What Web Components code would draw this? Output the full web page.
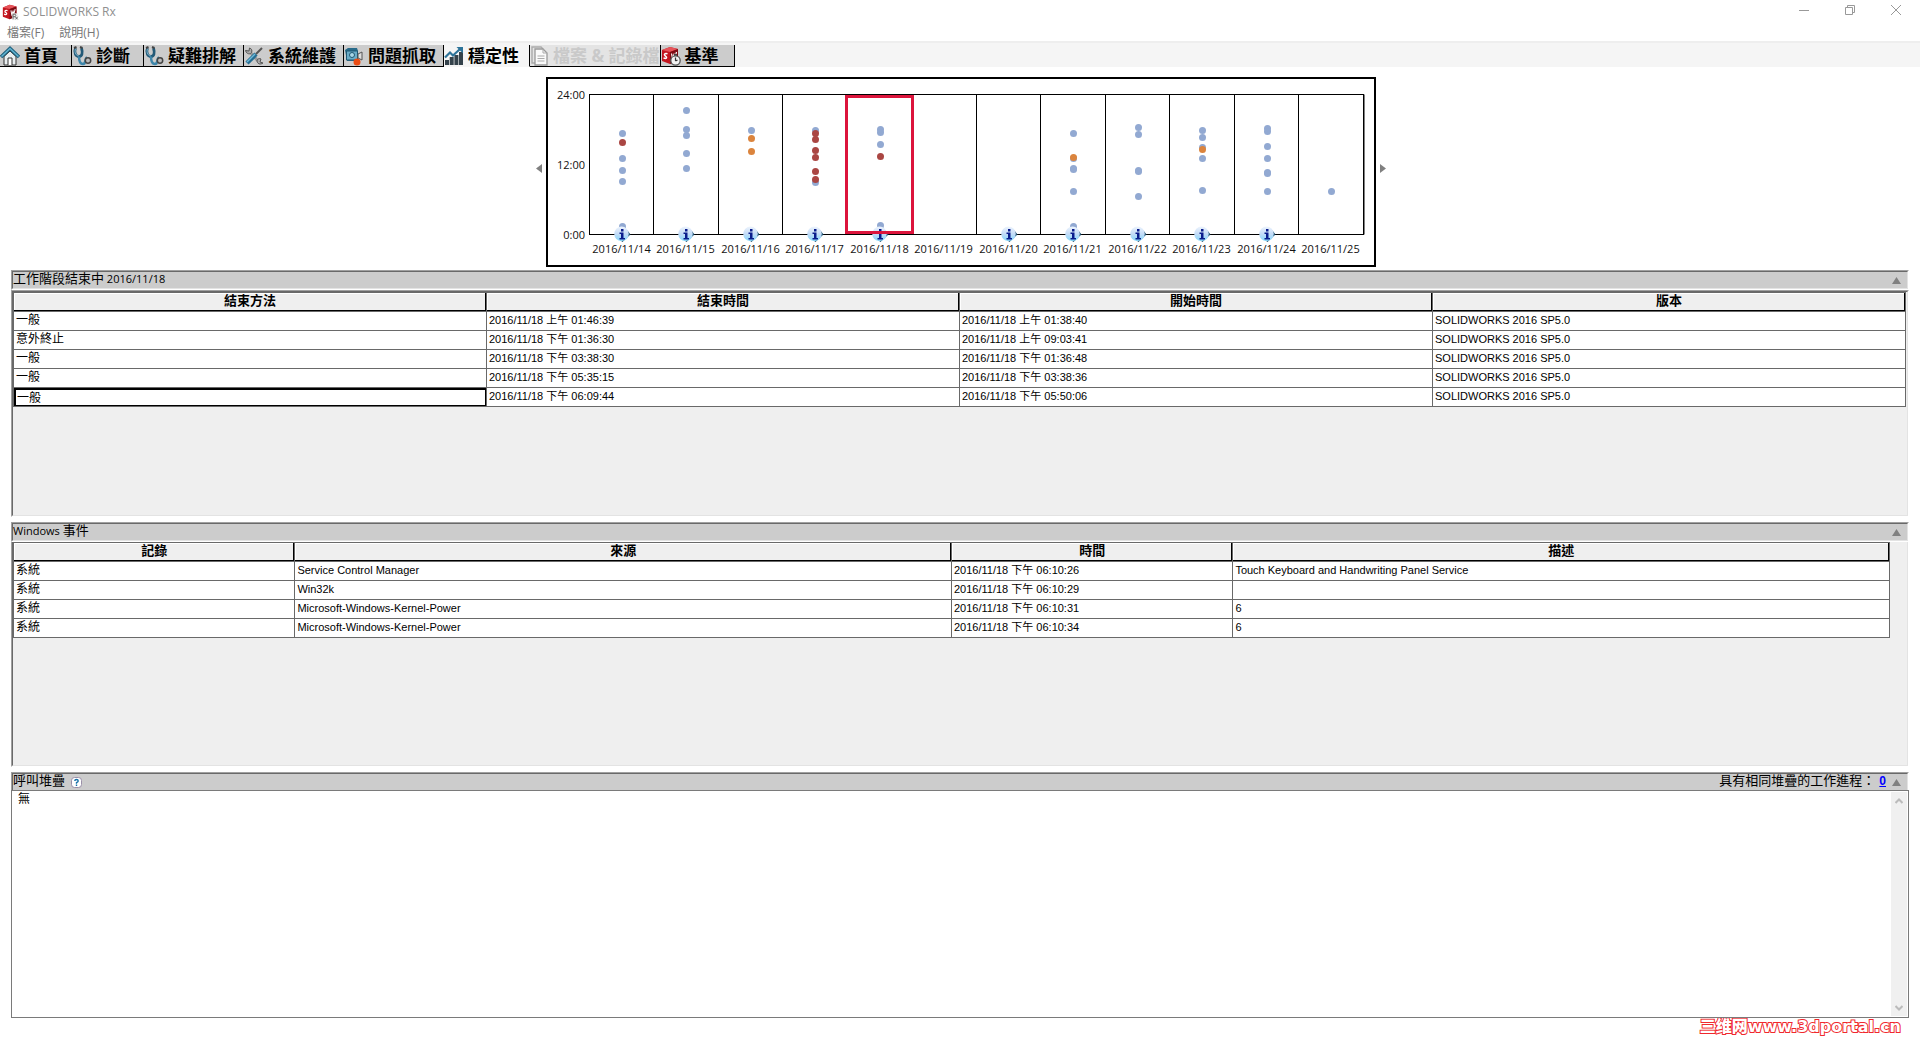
<!DOCTYPE html>
<html lang="zh-Hant">
<head>
<meta charset="utf-8">
<title>SOLIDWORKS Rx</title>
<style>
html,body{margin:0;height:100%}
body{background:#fff;color:#000;font-family:"Open Sans","Noto Sans CJK TC",sans-serif;font-size:12px}
</style>
</head>
<body>
<rx-app></rx-app>
<script>
const BASE = `*{box-sizing:border-box}
button{font:inherit;color:inherit;background:none;border:0;padding:0;margin:0}
svg{display:block;flex:none}`;

function define(name, render) {
  customElements.define(name, class extends HTMLElement {
    constructor() { super(); this.attachShadow({mode: 'open'}); }
    connectedCallback() { this.shadowRoot.innerHTML = render(this); }
  });
}

const CUBE = `<path d="M1 4 9 1l8 2v11l-8 4-8-3z" fill="#c4161f"/><path d="M1 4 9 1l8 2-8 3z" fill="#e6545a"/><path d="M9 6l8-3v11l-8 4z" fill="#7c0a12"/><path d="M6.500 7.800c-3-1-4 1-2 2.300s1 3.200-2 1.800" fill="none" stroke="#fff" stroke-width="1.500"/><path d="M10.500 7.500l1 5 1.500-4 1 3 1.500-5.500" fill="none" stroke="#fff" stroke-width="1.200"/>`;
const STETH = `<path d="M3.500 2C1.500 7 4 10.500 7 10.500S11 7 9.500 2" fill="none" stroke="#235a78" stroke-width="2.800"/><path d="M3.500 2.500C2 7 4.500 10 7 10" fill="none" stroke="#7fb6d0"/><path d="M2 2l2.500-1M8 1l2.500 1" stroke="#444" stroke-width="2"/><path d="M7 10.500c0 4 1 7.500 4 7.500 3.500 0 1.500-6 4-6.500" fill="none" stroke="#3d86aa" stroke-width="2.500"/><circle cx="16" cy="14.500" r="2.700" fill="#bbb" stroke="#444" stroke-width="1.500"/>`;
const ICONS = {
  app: CUBE + `<path d="M12 11h7v8h-7z" fill="#eee"/><path d="M13 18v-6h2.500q1.500 1.500 0 3H13m2.500 0 3 3m0-3-2.500 3" fill="none" stroke="#555"/>`,
  home: `<path d="M4 10.500 10 5l6 5.500V19H4z" fill="#e9eef0" stroke="#333"/><path d="M8 19v-7h4v7" fill="#fff" stroke="#333"/><path d="M1 11 10 2.500l9 8.500" fill="none" stroke="#1d5f7c" stroke-width="3.500"/><path d="M1.500 10.500 10 2.500l8.500 8" fill="none" stroke="#62b4d2" stroke-width="1.500"/>`,
  steth: STETH,
  tools: `<path d="m6 6 9 10" stroke="#999" stroke-width="3"/><path d="M1.500 4.500c1 4 5 4 6 2s0-4-2-4.500l-.5 3zM13 14c0 4 3 5 6 3l-3-1 1-3c-2-1-3 0-4 1z" fill="#aaa" stroke="#555"/><path d="M3 17 12 8" stroke="#256d92" stroke-width="4.500"/><path d="M3 16 11 8" stroke="#6fb9d8" stroke-width="1.500"/><path d="m12 8 6-6" stroke="#555" stroke-width="2"/>`,
  camera: `<path d="M1 4 4 2h9l1 3v10H3z" fill="#286b8a"/><path d="M2.500 5h11v9h-11z" fill="#6aacc8" stroke="#205873"/><circle cx="8" cy="9" r="2.500" fill="#a9d7e8" stroke="#205873"/><path d="m14 8 4-2v8l-4-2z" fill="#ddd" stroke="#555"/><circle cx="13" cy="16" r="3.500" fill="#ea4b12"/>`,
  chart: `<path d="M1 14h4v5H1zM5.700 11h4v8h-4zM10.400 9h4v10h-4zM15 6h4v13h-4z" fill="#34424b"/><path d="m1 11.500 5-5 3 3 7-6.500" fill="none" stroke="#2d7399" stroke-width="2.200"/><path d="M12.500 1H19v6.500z" fill="#2d7399"/>`,
  page: `<path d="M1 3V17h3M1 3V1h9l2 2" fill="none" stroke="#aaa" stroke-width="1.400"/><path d="M4 3h8l4 4v12H4z" fill="#fafafa" stroke="#999" stroke-width="1.300"/><path d="M12 3v4h4M6.500 10h7M6.500 12.500h7M6.500 15h7" fill="none" stroke="#aaa"/>`,
  bench: CUBE + `<path d="M14.500 8V10" stroke="#444" stroke-width="3"/><circle cx="14.500" cy="14.500" r="4.700" fill="#f3f3f3" stroke="#555" stroke-width="1.300"/><path d="M14.500 15v-3.500M14.500 15l2-1" stroke="#333" stroke-width="1.200"/>`
};

define('rx-icon', el => {
  const s = el.getAttribute('size') || 20;
  return `<style>${BASE}:host{display:block;flex:none}</style><svg width="${s}" height="${s}" viewBox="0 0 20 20">${ICONS[el.getAttribute('name')]}</svg>`;
});

define('rx-titlebar', () => `<style>${BASE}
:host{display:flex;align-items:center;height:24px;padding:0 1px;color:#909090}
h1{flex:1;margin:0 0 0 4px;font-size:12px;font-weight:400;line-height:20px}
rx-icon{margin-left:1px}
button{width:46px;height:20px;display:flex;justify-content:center;align-items:center}
div{display:flex;align-self:flex-start}
</style><rx-icon name="app" size="17"></rx-icon><h1>SOLIDWORKS Rx</h1>
<div><button aria-label="Minimize"><svg width="10" height="10"><path d="M0 5.500h10" stroke="#999"/></svg></button>
<button aria-label="Restore"><svg width="10" height="10" fill="none" stroke="#999"><path d="M.5 2.500h7v7h-7zM2.500 2.500v-2h7v7h-2"/></svg></button>
<button aria-label="Close"><svg width="10" height="10"><path d="M0 0l10 10M10 0 0 10" stroke="#999"/></svg></button></div>`);

define('rx-menu', () => `<style>${BASE}
:host{display:flex;height:17px;padding-left:7px;gap:15px;color:#777}
button{line-height:17px}
</style><button>檔案(F)</button><button>說明(H)</button>`);

define('rx-tab', el => `<style>${BASE}
:host{display:block}
button{display:flex;align-items:center;gap:4px;height:22px;min-width:${el.getAttribute('w')}px;background:#ccc;border:solid #000;border-width:0 1px 1px 0;font-size:17px;font-weight:700;line-height:20px;white-space:nowrap}
:host([active]) button{background:none;border-color:transparent;border-right-color:#000}
:host([off]) button{background:#e4e4e4;color:#c9c9c9;padding-left:1px;gap:2px}
</style><button role="tab" ${el.hasAttribute('off') ? 'disabled' : ''} aria-selected="${el.hasAttribute('active')}"><rx-icon name="${el.getAttribute('icon')}"></rx-icon><slot></slot></button>`);

define('rx-tabs', () => `<style>${BASE}
:host{display:flex;height:26px;border-top:2px solid #eee;padding-top:2px;background:#f5f5f5}
</style>
<rx-tab icon="home" w="72">首頁</rx-tab><rx-tab icon="steth" w="72">診斷</rx-tab><rx-tab icon="steth" w="100">疑難排解</rx-tab><rx-tab icon="tools" w="100">系統維護</rx-tab><rx-tab icon="camera" w="100">問題抓取</rx-tab><rx-tab icon="chart" w="86" active>穩定性</rx-tab><rx-tab icon="page" w="130" off>檔案 &amp; 記錄檔</rx-tab><rx-tab icon="bench" w="74">基準</rx-tab>`);

/* Each day lists its sessions as colour code + vertical position in the plot. */
const DAYS = [
  ['14', 1, 'b56 r65 b81 b93 b104 b149'], ['15', 1, 'b33 b52 b58 b76 b91'],
  ['16', 1, 'b53 o61 o74'], ['17', 1, 'b53 r56 r62 r73 r80 r94 b105 r102'],
  ['18', 1, 'b52 b55 b67 r79 b148'], ['19', 0, ''], ['20', 1, ''],
  ['21', 1, 'b56 b81 o80 b91 b92 b114 b149'], ['22', 1, 'b50 b57 b93 b94 b119'],
  ['23', 1, 'b53 b60 b70 o72 b81 b113'], ['24', 1, 'b51 b54 b69 b81 b95 b96 b114'], ['25', 0, 'b114']
];
define('rx-timeline', () => {
  const C = {b: '#92a9d2', r: '#aa4643', o: '#db843d'}, STEP = 64.5;
  const days = DAYS.map(([d, info, pts], i) => {
    const x = Math.floor(43 + STEP * i) + .5, cx = x + 33;
    return `<path d="M${x} 17v140" stroke="#000"/>` +
      pts.split(' ').filter(Boolean).map(p => `<circle cx="${cx}" cy="${+p.slice(1) + .5}" r="3.500" fill="${C[p[0]]}"/>`).join('') +
      (info ? `<g transform="translate(${cx - 8.5} 149.500)"><path d="M4 12 8.500 15.500l2-2L16.500 8l-3-4z" fill="#1d4f6e"/><circle cx="7.500" cy="7.300" r="7.300" fill="url(#g)"/><path d="M7 2.500h2.500V5H7zM5.500 6h4v5.500H11V13H5.500v-1.500H7v-4H5.500z" fill="#0a1c8c"/></g>` : '') +
      `<text x="${cx - 1}" y="176" text-anchor="middle">2016/11/${d}</text>`;
  }).join('');
  return `<style>${BASE}
:host{display:flex;justify-content:center;align-items:center;gap:4px;padding-left:2px}
.chart{border:2px solid #000;width:830px;height:190px;background:#fff}
.chart svg{margin:-2px}
text{font-size:11px;fill:#111}
button{padding-bottom:8px}
</style>
<button aria-label="Previous"><svg width="6" height="9"><path d="M6 0v9L0 4.500z" fill="#808080"/></svg></button>
<div class="chart"><svg width="830" height="190"><defs><linearGradient id="g" x2="0" y2="1"><stop offset="0" stop-color="#edf4fd"/><stop offset=".5" stop-color="#c5dcf7"/><stop offset="1" stop-color="#85d8fc"/></linearGradient></defs>
<path d="M43 17.500h775v140H43M817.500 17v140" fill="none" stroke="#000"/>
<text x="39" y="22" text-anchor="end">24:00</text><text x="39" y="92" text-anchor="end">12:00</text><text x="39" y="162" text-anchor="end">0:00</text>
${days}<rect x="300.500" y="19.500" width="66" height="136" fill="none" stroke="#dc143c" stroke-width="3"/></svg></div>
<button aria-label="Next"><svg width="6" height="9"><path d="M0 0v9l6-4.500z" fill="#808080"/></svg></button>`;
});

define('rx-bar', () => `<style>${BASE}
:host{display:block;border:1px solid;border-color:#a0a0a0 #fff #fff #a0a0a0;height:20px}
:host([flush]){height:18px;border-bottom:0}
header{display:flex;align-items:flex-start;gap:6px;height:18px;border:1px solid;border-color:#696969 #e3e3e3 #e3e3e3 #696969;background:#ccc;font-size:13px;line-height:12px}
:host([flush]) header{height:17px;border-bottom:0}
h2{margin:0;font:inherit;white-space:nowrap}
.end{margin-left:auto;display:flex}
.toggle{align-self:center;margin-right:6px}
</style><header><h2><slot></slot></h2><slot name="help"></slot><div class="end"><slot name="end"></slot></div><button class="toggle" aria-label="Collapse"><svg width="9" height="7"><path d="M4.500 0 9 7H0z" fill="#808080"/></svg></button></header>`);

const SESSIONS = {
  cols: [['結束方法', 25], ['結束時間', 25], ['開始時間', 25], ['版本', 25]],
  rows: [
    ['一般', '2016/11/18 上午 01:46:39', '2016/11/18 上午 01:38:40'],
    ['意外終止', '2016/11/18 下午 01:36:30', '2016/11/18 上午 09:03:41'],
    ['一般', '2016/11/18 下午 03:38:30', '2016/11/18 下午 01:36:48'],
    ['一般', '2016/11/18 下午 05:35:15', '2016/11/18 下午 03:38:36'],
    ['一般', '2016/11/18 下午 06:09:44', '2016/11/18 下午 05:50:06']
  ].map(r => [...r, 'SOLIDWORKS 2016 SP5.0'])
};
const EVENTS = {
  cols: [['記錄', 15], ['來源', 35], ['時間', 15], ['描述', 35]],
  rows: [
    ['系統', 'Service Control Manager', '2016/11/18 下午 06:10:26', 'Touch Keyboard and Handwriting Panel Service'],
    ['系統', 'Win32k', '2016/11/18 下午 06:10:29', ''],
    ['系統', 'Microsoft-Windows-Kernel-Power', '2016/11/18 下午 06:10:31', '6'],
    ['系統', 'Microsoft-Windows-Kernel-Power', '2016/11/18 下午 06:10:34', '6']
  ]
};
define('rx-grid', el => {
  const d = el.getAttribute('data') === 'events' ? EVENTS : SESSIONS;
  return `<style>${BASE}
:host{display:flex;box-sizing:border-box;background:#efefef;border:1px solid;border-color:#a0a0a0 #fff #fff #a0a0a0}
.in{flex:1;border:1px solid;border-color:#696969 #e3e3e3 #e3e3e3 #696969;padding-right:1px}
:host([tucked]){border-top:0}
:host([tucked]) .in{border-top:0;padding-right:17px}
table{width:100%;table-layout:fixed;border-spacing:0;border:solid #696969;border-width:1px 0 0 1px;font-family:"Liberation Sans","Noto Sans CJK TC",sans-serif;font-size:11px}
th,td{height:19px;padding:0 2px 2px;line-height:16px;border:solid #696969;border-width:0 1px 1px 0;white-space:nowrap;overflow:hidden}
th{font-size:13px;box-shadow:inset -1px -1px #000,inset 1px 1px #fff}
td{background:#fff;text-align:left;line-height:14px;padding-bottom:3px}
td:first-child{font-size:12px}
td.sel{box-shadow:inset 0 0 0 1px #000,inset 1px 1px 0 1px #000;padding:2px 3px 1px}
</style><div class="in"><table><colgroup>${d.cols.map(c => `<col style="width:${c[1]}%">`).join('')}</colgroup>
<thead><tr>${d.cols.map(c => `<th scope="col">${c[0]}</th>`).join('')}</tr></thead>
<tbody>${d.rows.map((r, i) => `<tr>${r.map((t, j) => `<td${d === SESSIONS && i === 4 && j === 0 ? ' class="sel"' : ''}>${t}</td>`).join('')}</tr>`).join('')}</tbody></table></div>`;
});

define('rx-stack', () => `<style>${BASE}
:host{display:flex;border:1px solid #7a7a7a;padding:1px;background:#fff}
textarea{flex:1;border:0;outline:0;resize:none;padding:0 5px;margin:0;font:inherit;font-size:12px;line-height:14px;color:#000;overflow:hidden;background:#fff}
.scroll{display:flex;flex-direction:column;justify-content:space-between;width:16px;background:#f0f0f0}
button{height:17px;display:flex;align-items:center;justify-content:center}
</style><textarea readonly aria-label="呼叫堆疊">無</textarea>
<div class="scroll"><button aria-label="Up"><svg width="8" height="6"><path d="m.5 5 3.500-3.500L7.500 5" fill="none" stroke="#bbb" stroke-width="2"/></svg></button><button aria-label="Down"><svg width="8" height="6"><path d="m.5 1 3.500 3.500L7.500 1" fill="none" stroke="#bbb" stroke-width="2"/></svg></button></div>`);

define('rx-watermark', () => `<style>${BASE}
:host{display:flex;box-sizing:border-box;justify-content:flex-end;align-items:center;overflow:hidden;height:22px;padding:0 19px 4px 0;font:700 16px/18px "DejaVu Sans","Noto Sans CJK SC",sans-serif;color:#fff;-webkit-text-stroke:2px #f0282d;paint-order:stroke}
</style><b lang="zh-Hans">三维网</b><span>www.3dportal.cn</span>`);

define('rx-app', () => `<style>${BASE}
:host{display:flex;flex-direction:column;min-height:100vh}
rx-titlebar,rx-menu,rx-tabs,rx-bar{box-sizing:border-box;flex:none}
main{flex:1;display:flex;flex-direction:column;padding:10px 11px 0}
rx-timeline{margin-bottom:3px}
section{display:flex;flex-direction:column;margin-bottom:5px}
section.sessions rx-grid{min-height:227px}
section.events rx-grid{min-height:225px}
section.stack{flex:1;margin-bottom:0}
rx-stack{flex:1}
small{font-size:11px}
.help{display:block;align-self:center;width:11px;height:11px}
.end{display:flex;gap:4px}
a{font:700 12px/15px "Liberation Sans",sans-serif;color:#00f}
</style>
<rx-titlebar></rx-titlebar><rx-menu></rx-menu><rx-tabs role="tablist"></rx-tabs>
<main><rx-timeline></rx-timeline>
<section class="sessions"><rx-bar>工作階段結束中<small> 2016/11/18</small></rx-bar><rx-grid data="sessions"></rx-grid></section>
<section class="events"><rx-bar><small>Windows </small>事件</rx-bar><rx-grid data="events" tucked></rx-grid></section>
<section class="stack"><rx-bar flush>呼叫堆疊<button slot="help" class="help" aria-label="Help"><svg width="11" height="11"><rect x=".5" y=".5" width="10" height="10" rx="3" fill="#fff" stroke="#9a8fa8"/><path d="M3.800 4q0-1.500 1.700-1.500T7.200 4q0 .8-1.700 1.700v1M5.500 7.600v1.400" fill="none" stroke="#1670a8" stroke-width="1.400"/></svg></button><span slot="end" class="end"><span>具有相同堆疊的工作進程：</span><a href="#">0</a></span></rx-bar><rx-stack></rx-stack></section>
</main><rx-watermark></rx-watermark>`);
</script>
</body>
</html>
